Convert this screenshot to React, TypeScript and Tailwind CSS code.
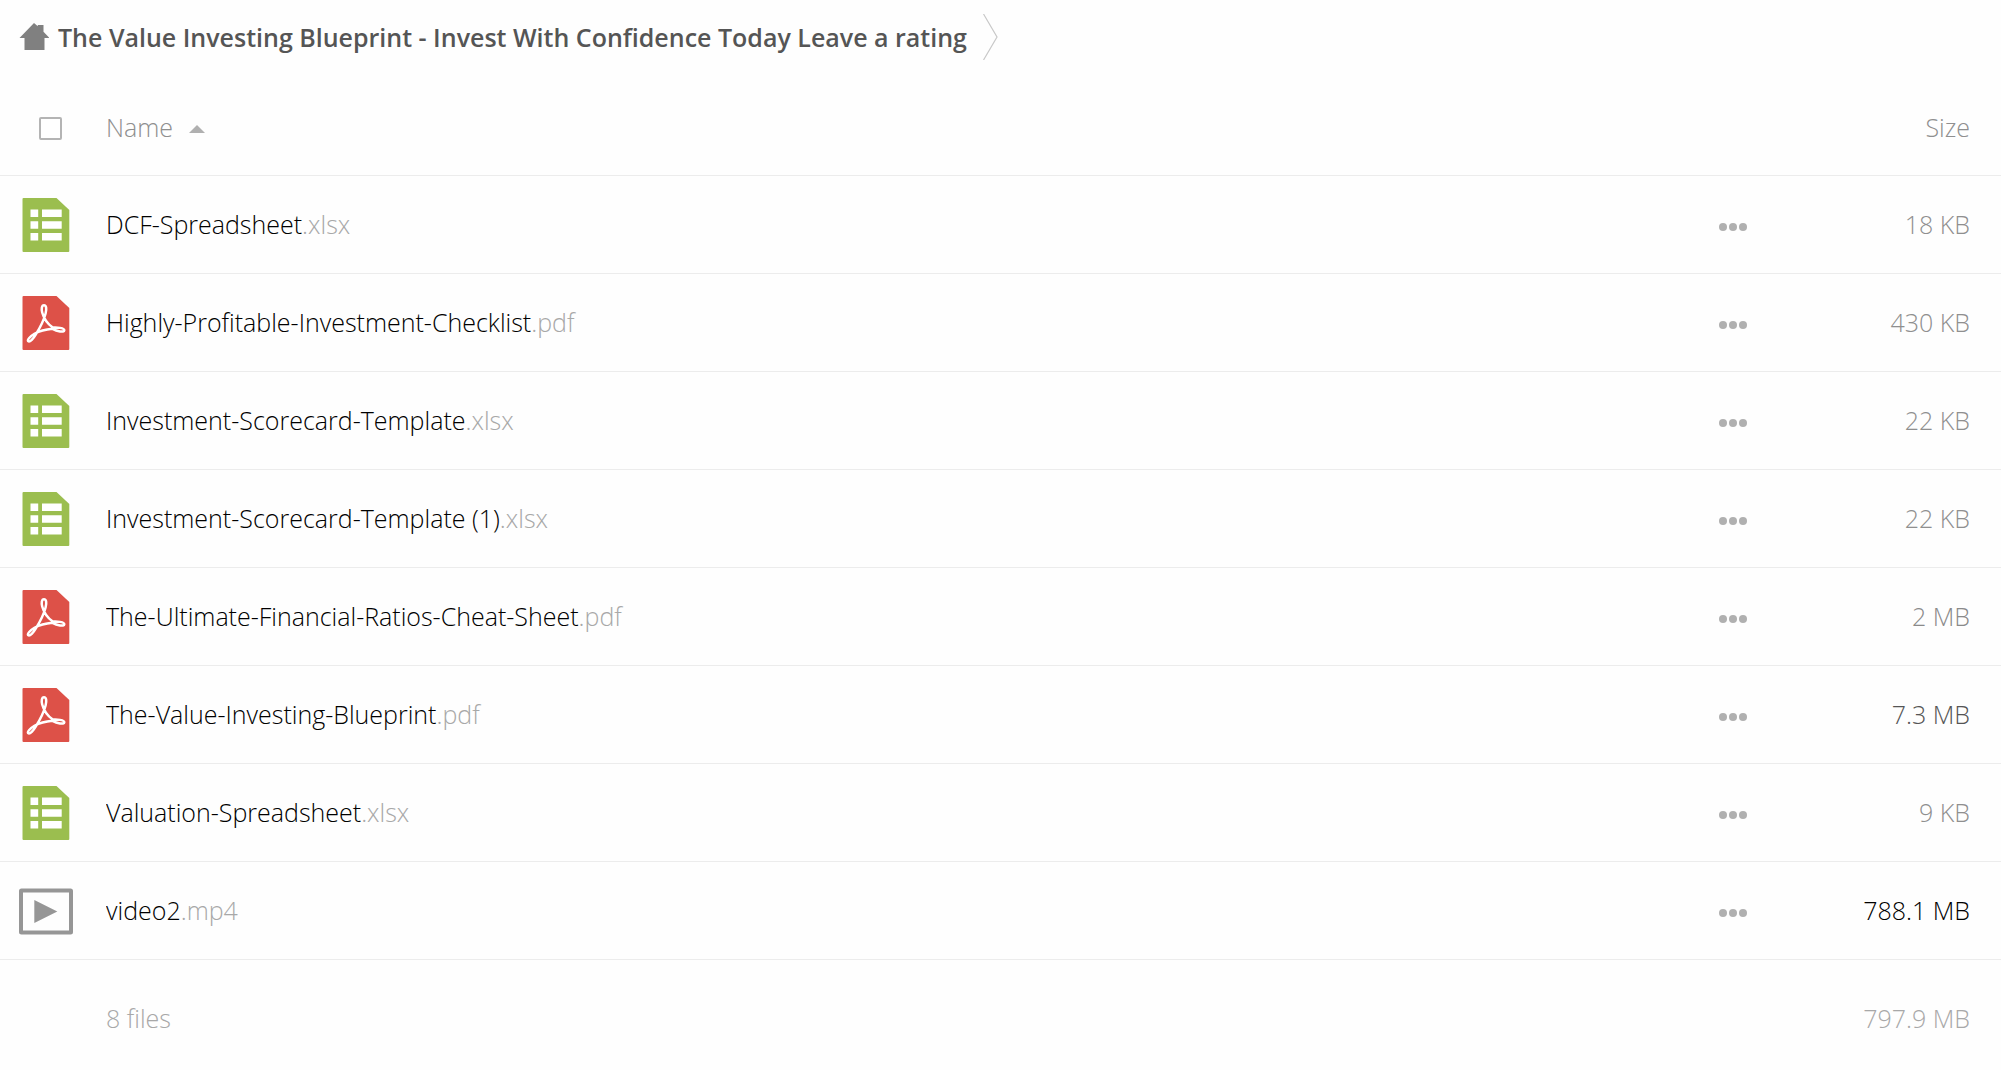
type Kind = 'xlsx' | 'pdf' | 'mp4';

const files: { name: string; kind: Kind; size: string; tone: string }[] = [
  { name: 'DCF-Spreadsheet', kind: 'xlsx', size: '18 KB', tone: 'text-[#8f8f8f]' },
  { name: 'Highly-Profitable-Investment-Checklist', kind: 'pdf', size: '430 KB', tone: 'text-[#8f8f8f]' },
  { name: 'Investment-Scorecard-Template', kind: 'xlsx', size: '22 KB', tone: 'text-[#8f8f8f]' },
  { name: 'Investment-Scorecard-Template (1)', kind: 'xlsx', size: '22 KB', tone: 'text-[#8f8f8f]' },
  { name: 'The-Ultimate-Financial-Ratios-Cheat-Sheet', kind: 'pdf', size: '2 MB', tone: 'text-[#8a8a8a]' },
  { name: 'The-Value-Investing-Blueprint', kind: 'pdf', size: '7.3 MB', tone: 'text-[#555555]' },
  { name: 'Valuation-Spreadsheet', kind: 'xlsx', size: '9 KB', tone: 'text-[#8f8f8f]' },
  { name: 'video2', kind: 'mp4', size: '788.1 MB', tone: 'text-black' },
];

function FileIcon({ kind }: { kind: Kind }) {
  if (kind === 'mp4') {
    return (
      <svg viewBox="0 0 54 54" className="block size-[54px]" aria-hidden="true">
        <rect x="2" y="6.5" width="50" height="42" rx="0.5" fill="none" stroke="#969696" strokeWidth="4" />
        <path d="M15.3 16v23L38.300 27.500z" fill="#969696" />
      </svg>
    );
  }
  return (
    <svg viewBox="0 0 54 54" className="block size-[54px]" aria-hidden="true">
      <path
        d="M4.500 0H37.500L50.300 12V53a1 1 0 0 1-1 1H4.500a1 1 0 0 1-1-1V1a1 1 0 0 1 1-1z"
        fill={kind === 'xlsx' ? '#9bbe4f' : '#dd5148'}
      />
      {kind === 'xlsx' ? (
        <path
          d="M11.500 11.500h7.700v7.500h-7.700zM23 11.500h19.700v7.500H23zM11.500 23.300h7.700v7.500h-7.700zM23 23.300h19.700v7.500H23zM11.500 35h7.700v7.500h-7.700zM23 35h19.700v7.500H23z"
          fill="#fff"
        />
      ) : (
        <path
          d="M25 9.200C22.600 9.200 22.300 13 23.200 16.500C24.800 22.500 29.500 28.500 33.800 31.600C37.500 31.200 45.500 31.800 45.300 34.400C45 36.800 38 35.300 33.500 32.800C28 33.300 20.500 35 15.500 37.800C11 40.500 8 43.800 9.200 45.200C10.800 46.800 14.500 42.500 17 38.200C20.500 32.500 25 23.500 26.600 17.500C27.700 13 27.500 9.200 25 9.200z"
          fill="none"
          stroke="#fff"
          strokeWidth="2.500"
          strokeLinejoin="round"
        />
      )}
    </svg>
  );
}

function Breadcrumb() {
  return (
    <nav aria-label="Breadcrumb" className="mb-1 flex h-[74px] items-center pl-[19px]">
      <a href="#" className="flex items-center gap-[9px] font-semibold text-[#555555]">
        <svg viewBox="0 0 30 28" className="h-7 w-[30px]" aria-hidden="true">
          <path d="M15 0L18.800 3.300V2H24.500V8.800L30.500 15H25.500V27H5.500V15H0.500z" fill="#808080" />
        </svg>
        <span>The Value Investing Blueprint - Invest With Confidence Today Leave a rating</span>
      </a>
      <svg viewBox="0 0 15 46" className="ml-4 h-[46px] w-[15px]" aria-hidden="true">
        <path d="M0.500 0L14 23L0.500 46" fill="none" stroke="#c8c8c8" strokeWidth="1.200" />
      </svg>
    </nav>
  );
}

export default function App() {
  return (
    <main className="min-h-screen bg-[#fefefe] font-['Open_Sans',sans-serif] text-[25px] leading-9 font-light">
      <Breadcrumb />
      <table className="w-full table-fixed border-separate border-spacing-0">
        <colgroup>
          <col className="w-[106px]" />
          <col />
          <col className="w-20" />
          <col className="w-57" />
        </colgroup>
        <thead>
          <tr className="h-[98px] text-[#8f8f8f]">
            <th className="border-b border-[#ececec] pl-[39px] text-left">
              <input
                type="checkbox"
                aria-label="Select all files"
                className="mt-1 block size-[23px] appearance-none rounded-xs border-2 border-[#b4b4b4] bg-white"
              />
            </th>
            <th className="border-b border-[#ececec] text-left font-light" aria-sort="ascending">
              <button type="button" className="flex items-center gap-4">
                Name
                <svg viewBox="0 0 16 8" className="mt-1 h-2 w-4" aria-hidden="true">
                  <path d="M8 0L16 8H0z" fill="#b0b0b0" />
                </svg>
              </button>
            </th>
            <th className="border-b border-[#ececec]" aria-label="Actions" />
            <th className="border-b border-[#ececec] pr-[31px] text-right font-light">
              <button type="button" className="block w-full text-right">Size</button>
            </th>
          </tr>
        </thead>
        <tbody>
          {files.map((file) => (
            <tr key={file.name} className="h-[98px]">
              <td className="border-b border-[#ececec] pl-[19px]">
                <FileIcon kind={file.kind} />
              </td>
              <td className="truncate border-b border-[#ececec] pb-0.5">
                <a href="#" className="text-black">
                  {file.name}
                  <span className="text-[#a8a8a8]">.{file.kind}</span>
                </a>
              </td>
              <td className="border-b border-[#ececec]">
                <button
                  type="button"
                  aria-label={`Actions for ${file.name}`}
                  className="mx-auto mt-1 flex items-center gap-0.5"
                >
                  <span className="size-2 rounded-full bg-[#b0b0b0]" />
                  <span className="size-2 rounded-full bg-[#b0b0b0]" />
                  <span className="size-2 rounded-full bg-[#b0b0b0]" />
                </button>
              </td>
              <td className={`border-b border-[#ececec] pr-[31px] pb-0.5 text-right ${file.tone}`}>{file.size}</td>
            </tr>
          ))}
        </tbody>
        <tfoot>
          <tr className="h-[108px] text-[#a8a8a8]">
            <td />
            <td className="pt-2">8 files</td>
            <td />
            <td className="pt-2 pr-[31px] text-right">797.9 MB</td>
          </tr>
        </tfoot>
      </table>
    </main>
  );
}
